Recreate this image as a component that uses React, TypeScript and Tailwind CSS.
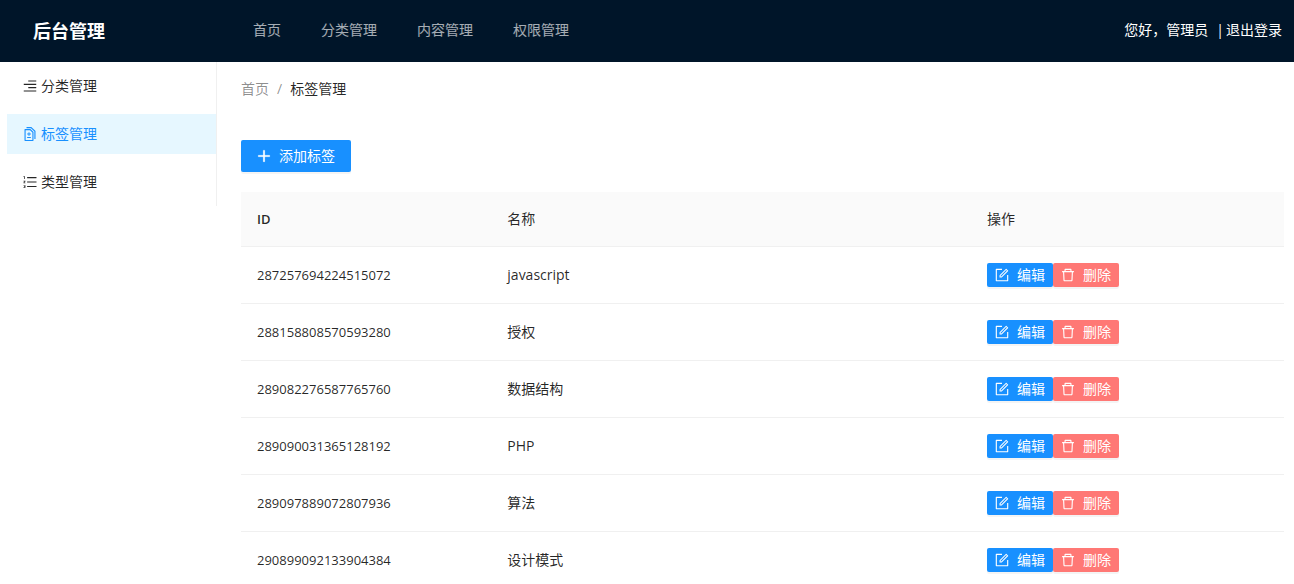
import { useState } from 'react';
import {
  AiOutlineAlignRight,
  AiOutlineDelete,
  AiOutlineDiff,
  AiOutlineForm,
  AiOutlineOrderedList,
  AiOutlinePlus,
} from 'react-icons/ai';

interface Tag {
  id: string;
  name: string;
}

// trims the built-in margin of the icons
const ICON_BOX = '64 64 896 896';

const navItems = ['首页', '分类管理', '内容管理', '权限管理'];

const menuItems = [
  { key: 'category', label: '分类管理', icon: AiOutlineAlignRight },
  { key: 'tag', label: '标签管理', icon: AiOutlineDiff },
  { key: 'type', label: '类型管理', icon: AiOutlineOrderedList },
];

const initialTags: Tag[] = [
  { id: '287257694224515072', name: 'javascript' },
  { id: '288158808570593280', name: '授权' },
  { id: '289082276587765760', name: '数据结构' },
  { id: '289090031365128192', name: 'PHP' },
  { id: '289097889072807936', name: '算法' },
  { id: '290899092133904384', name: '设计模式' },
];

function Header() {
  return (
    <header className="flex h-[62px] items-center bg-[#001529] pr-3 pl-[33px] text-sm text-white">
      <h1 className="w-[220px] text-lg font-bold">后台管理</h1>
      <nav className="flex flex-1 gap-10 pb-0.5">
        {navItems.map((item) => (
          <a key={item} href="#" className="text-white/65 hover:text-white">
            {item}
          </a>
        ))}
      </nav>
      <div className="flex items-center pb-0.5">
        <span className="mr-2">您好，管理员</span>
        <span className="mr-0.5">|</span>
        <a href="#">退出登录</a>
      </div>
    </header>
  );
}

function Sidebar() {
  const [activeKey, setActiveKey] = useState('tag');

  return (
    <aside className="w-[217px] shrink-0 pl-[7px]">
      <ul className="space-y-2 border-r border-[#f0f0f0] py-1">
        {menuItems.map(({ key, label, icon: Icon }) => (
          <li key={key}>
            <a
              href="#"
              onClick={() => setActiveKey(key)}
              className={`flex h-10 items-center gap-1 px-4 ${
                activeKey === key ? 'bg-[#e6f7ff] text-[#1890ff]' : 'hover:text-[#1890ff]'
              }`}
            >
              <Icon viewBox={ICON_BOX} className="h-3.5 w-3.5" />
              {label}
            </a>
          </li>
        ))}
      </ul>
    </aside>
  );
}

export default function App() {
  const [tags, setTags] = useState<Tag[]>(initialTags);

  const removeTag = (id: string) => {
    setTags(tags.filter((tag) => tag.id !== id));
  };

  return (
    <div className="min-h-screen bg-white font-['Open_Sans','Noto_Sans_CJK_SC',sans-serif] text-sm text-black/85">
      <Header />
      <div className="flex">
        <Sidebar />
        <main className="min-w-0 flex-1 pt-4 pr-2.5 pl-6">
          {/* Breadcrumb */}
          <nav className="flex leading-[22px]">
            <a href="#" className="text-black/45">首页</a>
            <span className="mx-2 text-black/45">/</span>
            <span>标签管理</span>
          </nav>

          <button className="mt-10 flex h-8 items-center gap-2 rounded-xs bg-[#1890ff] px-4 text-white shadow-[0_2px_0_rgba(0,0,0,0.045)]">
            <AiOutlinePlus viewBox={ICON_BOX} className="h-3.5 w-3.5 stroke-current stroke-[40]" />
            添加标签
          </button>

          {/* Tag table */}
          <table className="mt-5 w-full table-fixed text-left leading-[22px]">
            <thead>
              <tr className="border-b border-[#f0f0f0] bg-[#fafafa]">
                <th className="w-[24%] p-4 text-[13px] font-semibold">ID</th>
                <th className="w-[46%] p-4 font-normal">名称</th>
                <th className="w-[30%] p-4 font-normal">操作</th>
              </tr>
            </thead>
            <tbody>
              {tags.map((tag) => (
                <tr key={tag.id} className="border-b border-[#f0f0f0]">
                  <td className="p-4 text-[13px]">{tag.id}</td>
                  <td className="p-4">{tag.name}</td>
                  <td className="p-4">
                    <div className="flex">
                      <button className="flex h-6 items-center gap-2 rounded-xs bg-[#1890ff] px-2 text-white shadow-[0_2px_0_rgba(0,0,0,0.045)]">
                        <AiOutlineForm viewBox={ICON_BOX} className="h-3.5 w-3.5" />
                        编辑
                      </button>
                      <button
                        onClick={() => removeTag(tag.id)}
                        className="flex h-6 items-center gap-2 rounded-xs bg-[#ff7875] px-2 text-white shadow-[0_2px_0_rgba(0,0,0,0.045)]"
                      >
                        <AiOutlineDelete viewBox={ICON_BOX} className="h-3.5 w-3.5" />
                        删除
                      </button>
                    </div>
                  </td>
                </tr>
              ))}
            </tbody>
          </table>
        </main>
      </div>
    </div>
  );
}
